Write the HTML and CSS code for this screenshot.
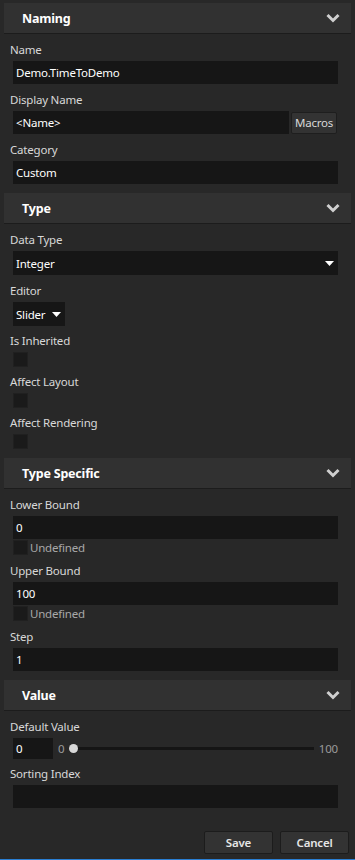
FILE: index.html
```html
<!DOCTYPE html>
<html lang="en">

<head>
    <meta charset="UTF-8">
    <meta name="viewport" content="width=device-width, initial-scale=1.0">
    <title>Property Editor</title>
    <link rel="stylesheet" href="styles.css">
</head>

<body>
    <div class="panel">
        <!-- Naming -->
        <div class="section">
            <div class="section-head">
                <span>Naming</span>
                <svg class="chevron" width="14" height="10" viewBox="0 0 14 10"><path d="M1.5 2 L7 7.5 L12.5 2" fill="none" stroke="#cfcfcf" stroke-width="3"/></svg>
            </div>
            <div class="section-body">
                <div class="field">
                    <div class="label">Name</div>
                    <div class="input">Demo.TimeToDemo</div>
                </div>
                <div class="field">
                    <div class="label">Display Name</div>
                    <div class="input-row">
                        <div class="input grow">&lt;Name&gt;</div>
                        <button class="btn-small">Macros</button>
                    </div>
                </div>
                <div class="field">
                    <div class="label">Category</div>
                    <div class="input">Custom</div>
                </div>
            </div>
        </div>

        <!-- Type -->
        <div class="section">
            <div class="section-head">
                <span>Type</span>
                <svg class="chevron" width="14" height="10" viewBox="0 0 14 10"><path d="M1.5 2 L7 7.5 L12.5 2" fill="none" stroke="#cfcfcf" stroke-width="3"/></svg>
            </div>
            <div class="section-body">
                <div class="field">
                    <div class="label">Data Type</div>
                    <div class="select">
                        <span>Integer</span>
                        <svg width="9" height="5" viewBox="0 0 9 5"><path d="M0 0 H9 L4.5 5 Z" fill="#fff"/></svg>
                    </div>
                </div>
                <div class="field">
                    <div class="label">Editor</div>
                    <div class="select small">
                        <span>Slider</span>
                        <svg width="9" height="5" viewBox="0 0 9 5"><path d="M0 0 H9 L4.5 5 Z" fill="#fff"/></svg>
                    </div>
                </div>
                <div class="field check-field">
                    <div class="label">Is Inherited</div>
                    <div class="checkbox"></div>
                </div>
                <div class="field check-field">
                    <div class="label">Affect Layout</div>
                    <div class="checkbox"></div>
                </div>
                <div class="field check-field">
                    <div class="label">Affect Rendering</div>
                    <div class="checkbox"></div>
                </div>
            </div>
        </div>

        <!-- Type Specific -->
        <div class="section">
            <div class="section-head">
                <span>Type Specific</span>
                <svg class="chevron" width="14" height="10" viewBox="0 0 14 10"><path d="M1.5 2 L7 7.5 L12.5 2" fill="none" stroke="#cfcfcf" stroke-width="3"/></svg>
            </div>
            <div class="section-body">
                <div class="field">
                    <div class="label">Lower Bound</div>
                    <div class="input">0</div>
                    <div class="undefined">
                        <div class="checkbox"></div>
                        <span>Undefined</span>
                    </div>
                </div>
                <div class="field">
                    <div class="label">Upper Bound</div>
                    <div class="input">100</div>
                    <div class="undefined">
                        <div class="checkbox"></div>
                        <span>Undefined</span>
                    </div>
                </div>
                <div class="field">
                    <div class="label">Step</div>
                    <div class="input">1</div>
                </div>
            </div>
        </div>

        <!-- Value -->
        <div class="section">
            <div class="section-head">
                <span>Value</span>
                <svg class="chevron" width="14" height="10" viewBox="0 0 14 10"><path d="M1.5 2 L7 7.5 L12.5 2" fill="none" stroke="#cfcfcf" stroke-width="3"/></svg>
            </div>
            <div class="section-body last">
                <div class="field">
                    <div class="label">Default Value</div>
                    <div class="slider-row">
                        <div class="input number">0</div>
                        <span class="range-min">0</span>
                        <div class="track">
                            <div class="thumb"></div>
                        </div>
                        <span class="range-max">100</span>
                    </div>
                </div>
                <div class="field sort-field">
                    <div class="label">Sorting Index</div>
                    <div class="input"></div>
                </div>
            </div>
        </div>

        <div class="footer">
            <button class="btn">Save</button>
            <button class="btn">Cancel</button>
        </div>
    </div>
    <div class="bottom-line"></div>
</body>

</html>
```

FILE: styles.css
```css
body {
    margin: 0;
    padding: 0;
    background: #282828;
    font-family: "Noto Sans", "Open Sans", sans-serif;
    font-size: 11.5px;
    letter-spacing: -0.2px;
    color: #d4d4d4;
    height: 860px;
    overflow: hidden;
    position: relative;
}

.panel {
    padding-top: 3px;
}

.section-head {
    margin: 0 4px;
    height: 30px;
    background: #313131;
    border-bottom: 1px solid #1c1c1c;
    display: flex;
    align-items: center;
    justify-content: space-between;
    padding: 0 11px 0 18px;
    font-size: 12.5px;
    font-weight: bold;
    color: #fff;
}

.chevron {
    display: block;
}

.section-body {
    padding: 0 17px 9px 10px;
}

.section-body.last {
    padding-bottom: 0;
}

.field {
    margin-top: 7px;
}

.check-field {
    margin-top: 6px;
}

.sort-field {
    margin-top: 6px;
}

.label {
    height: 16px;
    line-height: 18px;
    margin-bottom: 4px;
    white-space: nowrap;
    color: #d8d8d8;
}

.input {
    margin-left: 3px;
    height: 23px;
    line-height: 23px;
    background: #161616;
    color: #fff;
    padding: 0 3px;
    box-sizing: border-box;
    white-space: nowrap;
}

.input-row {
    display: flex;
    align-items: center;
    gap: 2px;
}

.grow {
    flex: 1;
}

.btn-small {
    height: 22px;
    width: 46px;
    margin-right: 1px;
    padding: 0;
    background: #333;
    border: 1px solid #1e1e1e;
    border-radius: 2px;
    color: #d8d8d8;
    font-family: inherit;
    font-size: 11.5px;
    letter-spacing: -0.2px;
}

.select {
    margin-left: 3px;
    height: 24px;
    background: #161616;
    color: #fff;
    display: flex;
    align-items: center;
    justify-content: space-between;
    padding: 0 4px 0 3px;
}

.select svg {
    display: block;
}

.select.small {
    width: 52px;
    box-sizing: border-box;
    padding-right: 4px;
}

.checkbox {
    margin-left: 3px;
    width: 15px;
    height: 15px;
    box-sizing: border-box;
    background: #1a1a1a;
    border: 1px solid #202020;
}

.undefined {
    display: flex;
    align-items: center;
    gap: 2px;
    margin-top: 1px;
    height: 15px;
    color: #a8a8a8;
}

.slider-row {
    display: flex;
    align-items: center;
}

.input.number {
    width: 40px;
    height: 21px;
    line-height: 21px;
    flex: none;
}

.range-min,
.range-max {
    color: #9a9a9a;
}

.range-min {
    margin-left: 5px;
    width: 11px;
}

.track {
    flex: 1;
    height: 3px;
    background: #151515;
    position: relative;
    margin-right: 5px;
}

.thumb {
    position: absolute;
    left: 0;
    top: -3px;
    width: 9px;
    height: 9px;
    border-radius: 50%;
    background: #d8d8d8;
}

.footer {
    display: flex;
    justify-content: flex-end;
    gap: 7px;
    padding: 23px 6px 0 0;
}

.btn {
    width: 69px;
    height: 23px;
    background: #333;
    border: 1px solid #1c1c1c;
    border-radius: 2px;
    color: #e6e6e6;
    font-family: inherit;
    font-size: 11.5px;
    letter-spacing: -0.2px;
    font-weight: 600;
    padding: 0;
}

.bottom-line {
    position: absolute;
    left: 0;
    right: 0;
    bottom: 0;
    height: 1px;
    background: #2a7fd4;
}
```
